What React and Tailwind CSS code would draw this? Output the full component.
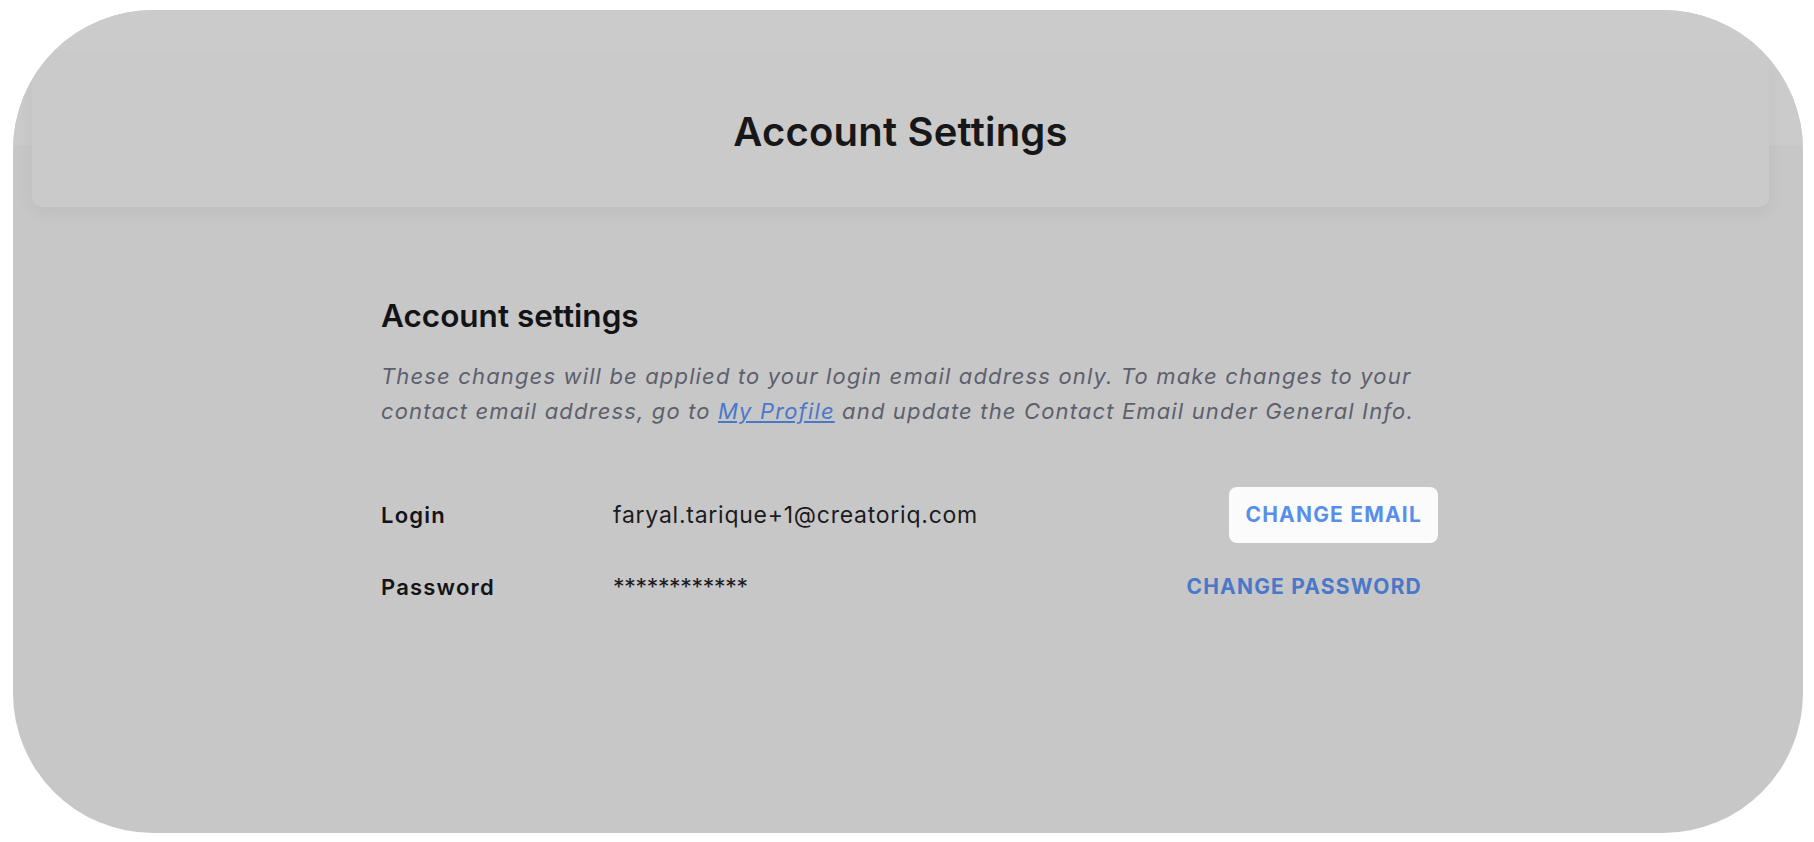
const font = { fontFamily: 'Inter, "Noto Sans", sans-serif' };

const Row = ({ label, value, action, highlighted, valueClass }) => (
  <div className="flex items-center h-[56px]">
    <div className="w-[232px] text-[22px] font-semibold tracking-[1.2px] text-[#141417]">{label}</div>
    <div className={`flex-1 text-[23px] text-[#1b1b1f] ${valueClass}`}>{value}</div>
    <button
      className={`h-[56px] px-4 rounded-lg text-[21px] font-bold uppercase tracking-[1.2px] ${
        highlighted ? 'bg-[#fbfbfb] text-[#5a8fe9]' : 'text-[#4a78c8]'
      }`}
    >
      {action}
    </button>
  </div>
);

export default function App() {
  return (
    <div className="w-full h-[842px] bg-white pt-[10px] pl-[13px] pr-[11px] pb-[9px]" style={font}>
      <div className="relative h-full rounded-[140px] bg-[#c7c7c7] overflow-hidden">
        {/* top nav strip under the overlay */}
        <div className="absolute inset-x-0 top-0 h-[135px] bg-[#cbcbcb]" />

        <div className="relative z-10 mt-[47px] ml-[19px] mr-[34px] h-[150px] rounded-b-[10px] bg-[#cacaca] shadow-[0_6px_18px_rgba(0,0,0,0.05)] flex items-center justify-center">
          <h1 className="text-[40px] font-semibold text-[#17171a] tracking-[0.2px]">Account Settings</h1>
        </div>

        <div className="w-[1057px] pt-[89px] ml-[368px]">
          <h2 className="text-[31.5px] font-semibold text-[#131316] leading-[40px]">Account settings</h2>
          <p className="mt-[23px] text-[22px] italic leading-[35px] tracking-[1.15px] text-[#5d5f6d]">
            These changes will be applied to your login email address only. To make changes to your
            <br />
            contact email address, go to{' '}
            <a href="#" className="text-[#4b78c9] underline underline-offset-2">My Profile</a>{' '}
            and update the Contact Email under General Info.
          </p>

          <div className="mt-[58px] flex flex-col gap-4">
            <Row
              label="Login"
              value="faryal.tarique+1@creatoriq.com"
              valueClass="tracking-[0.75px]"
              action="Change Email"
              highlighted
            />
            <Row label="Password" value="************" valueClass="tracking-[-0.3px]" action="Change Password" />
          </div>
        </div>
      </div>
    </div>
  );
}
